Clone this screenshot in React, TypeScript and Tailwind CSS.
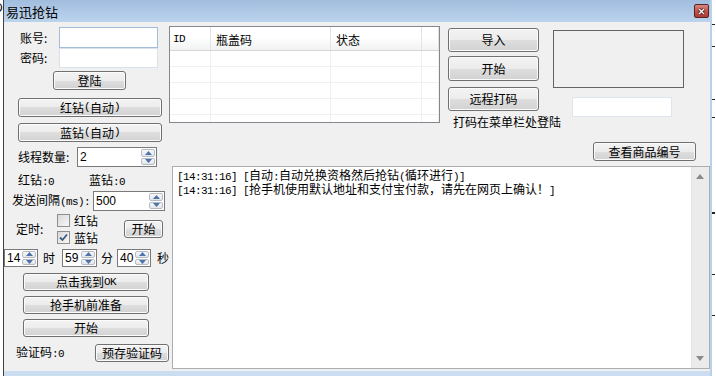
import type { ReactNode } from 'react'

// half-width (ascii) runs are drawn in a 6px-advance mono face, like SimSun's Latin glyphs
function Txt({ text }: { text: string }) {
  const parts = text.match(/[\x20-\x7e]+|[^\x20-\x7e]+/g) || []
  return (
    <>
      {parts.map((p, i) =>
        /[\x20-\x7e]/.test(p[0]) ? (
          <span key={i} className="whitespace-pre font-['Liberation_Mono',monospace] text-[11px] tracking-[-0.6px]">
            {p}
          </span>
        ) : (
          <span key={i}>{p}</span>
        ),
      )}
    </>
  )
}

function Btn({ label, className }: { label: string; className: string }) {
  return (
    <div
      className={`flex shrink-0 items-center justify-center rounded-[3px] border border-[#707070] bg-[linear-gradient(#f3f3f3,#ececec_50%,#dedede_50%,#d2d2d2)] text-[12px] leading-none shadow-[inset_0_0_0_1px_#fbfbfb] ${className}`}
    >
      <Txt text={label} />
    </div>
  )
}

function Arrow({ up }: { up?: boolean }) {
  return (
    <div className="flex flex-1 items-center justify-center rounded-[2px] border border-[#b6bcc6] bg-[linear-gradient(#f7f7f7,#e3e6ea)]">
      <svg width="7" height="4" viewBox="0 0 7 4">
        <path d={up ? 'M0 4 L3.5 0 L7 4 Z' : 'M0 0 L3.5 4 L7 0 Z'} fill="#4e73a8" />
      </svg>
    </div>
  )
}

function Spin({ value, className }: { value: string; className: string }) {
  return (
    <div className={`flex shrink-0 border border-[#7a7a7a] bg-white ${className}`}>
      <div className="flex flex-1 items-center pl-[2px] font-['Liberation_Sans',sans-serif] text-[12px] leading-none">
        {value}
      </div>
      <div className="flex w-[15px] flex-col gap-[1px] py-[1px] pr-[1px]">
        <Arrow up />
        <Arrow />
      </div>
    </div>
  )
}

function Check({ checked, label }: { checked?: boolean; label: string }) {
  return (
    <div className="flex h-[13px] items-center gap-[4px]">
      <div className="flex h-[13px] w-[13px] items-center justify-center border border-[#8e8f8f] bg-[linear-gradient(135deg,#d8d8d8,#f8f8f8)]">
        {checked ? (
          <svg width="9" height="9" viewBox="0 0 9 9">
            <path d="M1 4.5 L3.5 7 L8 1.5" fill="none" stroke="#3d5a86" strokeWidth="1.8" />
          </svg>
        ) : null}
      </div>
      <span>{label}</span>
    </div>
  )
}

function Row({ children, className }: { children: ReactNode; className: string }) {
  return <div className={`flex shrink-0 items-center ${className}`}>{children}</div>
}

function ListView() {
  const cols = ['w-[41px] pl-[3px]', 'w-[120px] pl-[5px]', 'w-[91px] pl-[5px]', 'flex-1']
  const heads = ['ID', '瓶盖码', '状态', '']
  return (
    <div className="mt-[4px] flex h-[97px] w-[271px] shrink-0 flex-col overflow-hidden border border-[#828790] bg-white">
      <div className="flex h-[24px] shrink-0 border-b border-[#d5d5d5] bg-[linear-gradient(#ffffff,#ffffff_45%,#f1f2f3)]">
        {heads.map((h, i) => (
          <div key={i} className={`flex items-center border-r border-[#e2e3e4] pt-[2px] ${cols[i]}`}>
            <Txt text={h} />
          </div>
        ))}
      </div>
      {[0, 1, 2, 3, 4].map((r) => (
        <div key={r} className="flex h-[16px] shrink-0 border-b border-[#f0f0f0]">
          {cols.map((c, i) => (
            <div key={i} className={`border-r border-[#f0f0f0] ${c}`} />
          ))}
        </div>
      ))}
    </div>
  )
}

export default function App() {
  return (
    <div className="flex h-[376px] w-[716px] overflow-hidden bg-white font-['Noto_Sans_CJK_SC',sans-serif] text-[12px] leading-none text-black">
      <div className="w-[3px] shrink-0 overflow-hidden">
        <span className="ml-[-6px] mt-[2px] block font-['Liberation_Sans',sans-serif] text-[12px]">D</span>
      </div>

      <div className="flex w-[709px] shrink-0 flex-col border-l border-r-2 border-l-[#3f3f3f] border-r-[#b9d1ea]">
        <div className="flex h-[22px] shrink-0 items-center bg-[linear-gradient(#a1bdde,#bcd3ec)]">
          <span className="ml-[2px] text-[13px]">易迅抢钻</span>
          <div className="ml-auto mr-[1px] flex h-[14px] w-[15px] items-center justify-center rounded-[2px] border border-[#5b2424] bg-[linear-gradient(#d88a80,#c2514a_50%,#b03c34)]">
            <svg width="7" height="7" viewBox="0 0 7 7">
              <path d="M1 1 L6 6 M6 1 L1 6" stroke="#3a1010" strokeWidth="2.6" />
              <path d="M1 1 L6 6 M6 1 L1 6" stroke="#ffffff" strokeWidth="1.4" />
            </svg>
          </div>
        </div>

        <div className="flex flex-1 bg-[#f0f0f0]">
          {/* left column */}
          <div className="flex w-[165px] shrink-0 flex-col">
            <Row className="mt-[5px] h-[21px]">
              <span className="ml-[16px] w-[39px]">账号:</span>
              <div className="h-full w-[99px] border border-[#a3bdd8] bg-white" />
            </Row>
            <Row className="h-[20px]">
              <span className="ml-[16px] w-[39px]">密码:</span>
              <div className="h-full w-[99px] border border-[#d9e1ea] bg-white" />
            </Row>
            <Btn label="登陆" className="ml-[49px] mt-[3px] h-[19px] w-[73px]" />
            <Btn label="红钻(自动)" className="ml-[14px] mt-[8px] h-[19px] w-[144px]" />
            <Btn label="蓝钻(自动)" className="ml-[14px] mt-[6px] h-[19px] w-[144px]" />
            <Row className="mt-[5px] h-[20px]">
              <span className="ml-[14px] w-[59px]">线程数量:</span>
              <Spin value="2" className="h-full w-[80px]" />
            </Row>
            <Row className="mt-[8px] h-[12px]">
              <span className="ml-[14px] w-[71px]">
                <Txt text="红钻:0" />
              </span>
              <span>
                <Txt text="蓝钻:0" />
              </span>
            </Row>
            <Row className="mt-[4px] h-[20px]">
              <span className="ml-[8px] w-[81px] whitespace-nowrap">
                <Txt text="发送间隔(ms):" />
              </span>
              <Spin value="500" className="h-full w-[72px]" />
            </Row>
            <Row className="mt-[3px] h-[30px]">
              <span className="ml-[12px] w-[41px]">定时:</span>
              <div className="flex w-[67px] flex-col gap-[4px]">
                <Check label="红钻" />
                <Check checked label="蓝钻" />
              </div>
              <Btn label="开始" className="h-[18px] w-[39px]" />
            </Row>
            <Row className="mt-[5px] h-[18px]">
              <Spin value="14" className="h-full w-[34px]" />
              <span className="ml-[5px] w-[19px]">时</span>
              <Spin value="59" className="h-full w-[35px]" />
              <span className="ml-[4px] w-[16px]">分</span>
              <Spin value="40" className="h-full w-[34px]" />
              <span className="ml-[6px]">秒</span>
            </Row>
            <Btn label="点击我到OK" className="ml-[19px] mt-[6px] h-[18px] w-[126px]" />
            <Btn label="抢手机前准备" className="ml-[19px] mt-[5px] h-[18px] w-[126px]" />
            <Btn label="开始" className="ml-[19px] mt-[5px] h-[18px] w-[126px]" />
            <Row className="mt-[7px] h-[18px]">
              <span className="ml-[12px] w-[81px]">
                <Txt text="验证码:0" />
              </span>
              <Btn label="预存验证码" className="h-full w-[74px]" />
            </Row>
          </div>

          {/* right area */}
          <div className="flex flex-1 flex-col">
            <div className="flex h-[144px] shrink-0">
              <ListView />
              <div className="ml-[8px] mt-[6px] flex w-[91px] shrink-0 flex-col">
                <Btn label="导入" className="h-[24px] w-[91px]" />
                <Btn label="开始" className="mt-[4px] h-[25px] w-[91px]" />
                <Btn label="远程打码" className="mt-[6px] h-[24px] w-[91px]" />
                <span className="ml-[5px] mt-[5px] whitespace-nowrap leading-[12px]">打码在菜单栏处登陆</span>
              </div>
              <div className="ml-[14px] mt-[8px] flex shrink-0 flex-col">
                <div className="h-[58px] w-[131px] border border-[#646464]" />
                <div className="ml-[19px] mt-[9px] h-[20px] w-[100px] border border-[#dfe5ec] bg-white" />
                <Btn label="查看商品编号" className="ml-[40px] mt-[25px] h-[19px] w-[103px]" />
              </div>
            </div>

            <div className="mb-[2px] ml-[3px] flex flex-1 border border-[#abadb3] bg-white">
              <div className="flex-1 pl-[4px] pt-[2px] leading-[12px]">
                <div className="whitespace-nowrap">
                  <Txt text="[14:31:16] [自动:自动兑换资格然后抢钻(循环进行)]" />
                </div>
                <div className="whitespace-nowrap">
                  <Txt text="[14:31:16] [抢手机使用默认地址和支付宝付款，请先在网页上确认！]" />
                </div>
              </div>
              <div className="flex w-[18px] flex-col justify-between border-l border-[#e4e4e4] bg-[#ebebeb] py-[7px] pl-[4px]">
                <svg width="8" height="5" viewBox="0 0 8 5">
                  <path d="M0 5 L4 0 L8 5 Z" fill="#8a8a8a" />
                </svg>
                <svg width="8" height="5" viewBox="0 0 8 5">
                  <path d="M0 0 L4 5 L8 0 Z" fill="#8a8a8a" />
                </svg>
              </div>
            </div>
          </div>
        </div>

        <div className="h-[5px] shrink-0 bg-[#cbddf0]" />
      </div>

      <div className="flex w-[4px] shrink-0 flex-col">
        <div className="mt-[24px] h-px w-[3px] bg-[#222]" />
        <div className="mt-[21px] h-px w-[3px] bg-[#222]" />
        <div className="mt-[52px] h-px w-[3px] bg-[#222]" />
        <div className="mt-[17px] h-px w-[3px] bg-[#222]" />
        <div className="mt-[94px] h-[2px] w-[3px] bg-[#222]" />
        <div className="mt-[60px] h-px w-[3px] bg-[#222]" />
        <div className="mt-[40px] h-px w-[3px] bg-[#222]" />
      </div>
    </div>
  )
}
